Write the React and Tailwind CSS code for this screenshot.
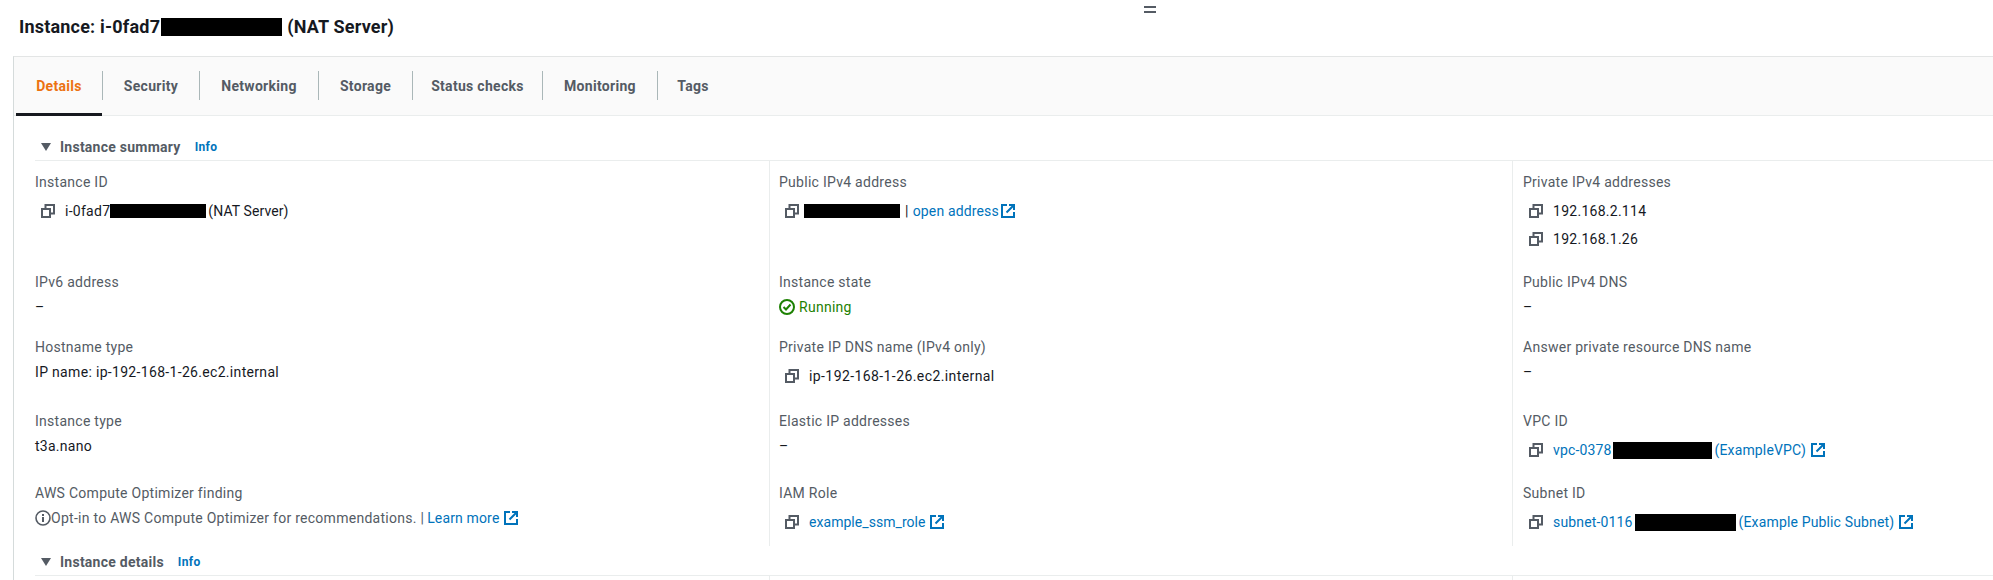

const Copy = () => (
  <svg width="14" height="14" viewBox="0 0 14 14" fill="none" stroke="#545b64" strokeWidth="2" className="shrink-0">
    <rect x="1" y="5" width="8" height="8" />
    <path d="M4.5 4V1H13V9.5H10" />
  </svg>
);
const Ext = () => (
  <svg width="14" height="14" viewBox="0 0 14 14" fill="none" stroke="#0073bb" strokeWidth="2" className="shrink-0">
    <path d="M6 1H1v12h12V8" />
    <path d="M5.5 8.5L12.5 1.5M8 1H13v5" />
  </svg>
);
const Black = ({ w, h = "h-[14px]", cls = "" }) => <span className={`block shrink-0 bg-black ${h} ${cls}`} style={{ width: w }} />;

const Label = ({ children }) => <div className="text-[#545b64] leading-[22px]">{children}</div>;
const Plain = ({ children, c = "" }) => <div className={`mt-[3px] leading-[22px] text-[#16191f] ${c}`}>{children}</div>;
const CopyRow = ({ children, c = "mt-[7px]" }) => (
  <div className={`${c} flex items-center h-[22px] pl-[6px] text-[#16191f] whitespace-nowrap`}>
    <Copy />
    <div className="ml-[10px] flex items-center">{children}</div>
  </div>
);
const Link = ({ children }) => <span className="text-[#0073bb] tracking-[0.15px]">{children}</span>;

const Cell = ({ border, pad = "pl-[10px]", top, children }) => (
  <div className={`${border ? `border-l border-[#eaeded] ${pad}` : ""} ${top ? "pt-[10px]" : ""}`}>{children}</div>
);
const Mid = ({ top, children }) => <Cell border pad="pl-[9px]" top={top}>{children}</Cell>;

const Section = ({ title, cls = "" }) => (
  <div className={`flex items-center h-[22px] pl-[6px] ${cls}`}>
    <svg width="10" height="8" viewBox="0 0 10 8" className="shrink-0"><path d="M0 0h10L5 8z" fill="#545b64" /></svg>
    <span className="ml-[9px] font-bold text-[#545b64] tracking-[0.25px]">{title}</span>
    <span className="ml-[14px] text-[12px] font-bold tracking-[0.35px] text-[#0073bb]">Info</span>
  </div>
);

const tabs = [["Details", "w-[87px]"], ["Security", "w-[97px]"], ["Networking", "w-[119px]"], ["Storage", "w-[94px]"], ["Status checks", "w-[130px]"], ["Monitoring", "w-[115px]"], ["Tags", "w-[71px]"]];

export default function App() {
  return (
    <div className="w-[1993px] h-[580px] overflow-hidden bg-white text-[14px] tracking-[0.27px] font-['Roboto',sans-serif] relative">
      <div className="absolute left-[1144px] top-[6px] w-[12px] h-[7px] border-y-2 border-[#545b64]" />
      <div className="h-[56px] pl-[19px] pb-[2px] flex items-center text-[18px] tracking-[0.2px] font-bold text-[#16191f] leading-[22px] whitespace-nowrap">
        <span>Instance: i-0fad7</span>
        <Black w="121px" h="h-[18px]" cls="mx-[1px]" />
        <span className="ml-[4px]">(NAT Server)</span>
      </div>
      <div className="ml-[13px] border-l border-t border-t-[#e3e5e5] border-l-[#d5dbdb] h-[524px]">
        <div className="h-[59px] bg-[#fafafa] border-b border-[#eaeded] pl-[2px] flex items-end">
          {tabs.map(([t, w], i) => (
            <div key={t} className={`${w} h-[44px] flex justify-center items-start pt-[4px] pr-[1px] relative`}>
              <span className={`font-bold tracking-[0.3px] leading-[22px] ${i === 0 ? "text-[#ec7211]" : "text-[#545b64]"}`}>{t}</span>
              {i < 6 && <div className="absolute right-0 top-0 h-[29px] w-px bg-[#aab7b8]" />}
              {i === 0 && <div className="absolute left-0 right-[1px] bottom-[-1px] h-[3px] bg-[#16191f]" />}
            </div>
          ))}
        </div>
        <div className="ml-[21px]">
          <Section title="Instance summary" cls="mt-[20px]" />
          <div className="border-t border-[#eaeded] mt-[2px]">
            <div className="grid grid-cols-[734px_743px_1fr] grid-rows-[110px_65px_74px_72px_64px]">
              <Cell top>
                <Label>Instance ID</Label>
                <CopyRow>
                  <span>i-0fad7</span><Black w="96px" /><span className="ml-[2px] tracking-[0.1px]">(NAT Server)</span>
                </CopyRow>
              </Cell>
              <Mid top>
                <Label>Public IPv4 address</Label>
                <CopyRow>
                  <Black w="96px" cls="-ml-[5px]" /><span className="ml-[5px]">|</span><Link><span className="ml-[4px]">open address</span></Link>
                  <span className="ml-[2px]"><Ext /></span>
                </CopyRow>
              </Mid>
              <Cell border top>
                <Label>Private IPv4 addresses</Label>
                <CopyRow>192.168.2.114</CopyRow>
                <CopyRow c="mt-[6px]">192.168.1.26</CopyRow>
              </Cell>

              <Cell><Label>IPv6 address</Label><Plain>–</Plain></Cell>
              <Mid>
                <Label>Instance state</Label>
                <div className="mt-[3px] flex items-center h-[22px] text-[#1d8102]">
                  <svg width="16" height="16" viewBox="0 0 16 16" fill="none" stroke="#1d8102" strokeWidth="2"><circle cx="8" cy="8" r="7" /><path d="M4.5 8l2.5 2.5 4.5-5" /></svg>
                  <span className="ml-[4px]">Running</span>
                </div>
              </Mid>
              <Cell border><Label>Public IPv4 DNS</Label><Plain>–</Plain></Cell>

              <Cell><Label>Hostname type</Label><Plain c="tracking-[0.32px]">IP name: ip-192-168-1-26.ec2.internal</Plain></Cell>
              <Mid><Label>Private IP DNS name (IPv4 only)</Label><CopyRow><span className="tracking-[0.41px]">ip-192-168-1-26.ec2.internal</span></CopyRow></Mid>
              <Cell border><Label>Answer private resource DNS name</Label><Plain>–</Plain></Cell>

              <Cell><Label>Instance type</Label><Plain>t3a.nano</Plain></Cell>
              <Mid><Label>Elastic IP addresses</Label><Plain>–</Plain></Mid>
              <Cell border>
                <Label>VPC ID</Label>
                <CopyRow>
                  <Link>vpc-0378</Link><Black w="99px" h="h-[17px]" cls="ml-[1px]" /><Link><span className="ml-[3px]">(ExampleVPC)</span></Link>
                  <span className="ml-[5px]"><Ext /></span>
                </CopyRow>
              </Cell>

              <Cell>
                <Label>AWS Compute Optimizer finding</Label>
                <div className="mt-[3px] flex items-center h-[22px] text-[#545b64] whitespace-nowrap">
                  <svg width="16" height="16" viewBox="0 0 16 16" fill="none" stroke="#545b64" strokeWidth="1.6" className="shrink-0"><circle cx="8" cy="8" r="7" /><path d="M8 7v5M8 4v2" strokeWidth="2" /></svg>
                  <span>Opt-in to AWS Compute Optimizer for recommendations. | </span>
                  <Link><span className="ml-[3px]">Learn more</span></Link>
                  <span className="ml-[5px]"><Ext /></span>
                </div>
              </Cell>
              <Mid>
                <Label>IAM Role</Label>
                <CopyRow><Link><span className="tracking-[0.05px]">example_ssm_role</span></Link><span className="ml-[4px]"><Ext /></span></CopyRow>
              </Mid>
              <Cell border>
                <Label>Subnet ID</Label>
                <CopyRow>
                  <Link>subnet-0116</Link><Black w="101px" h="h-[17px]" cls="ml-[2px]" /><Link><span className="ml-[3px]">(Example Public Subnet)</span></Link>
                  <span className="ml-[5px]"><Ext /></span>
                </CopyRow>
              </Cell>
            </div>
          </div>
          <Section title="Instance details" cls="mt-[5px]" />
          <div className="border-t border-[#eaeded] mt-[2px] grid grid-cols-[734px_743px_1fr] h-[10px]">
            <div /><div className="border-l border-[#eaeded]" /><div className="border-l border-[#eaeded]" />
          </div>
        </div>
      </div>
    </div>
  );
}
